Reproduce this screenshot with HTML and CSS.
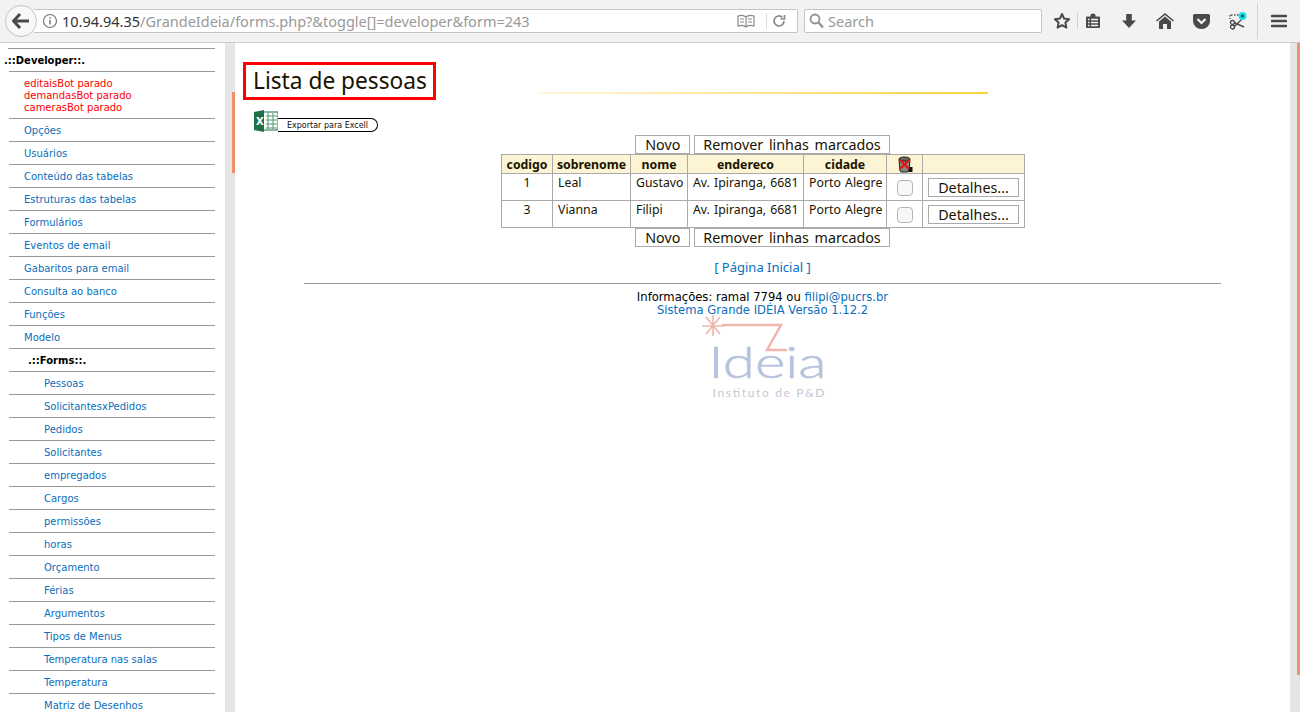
FILE: index.html
```html
<!DOCTYPE html>
<html lang="pt-BR">
<head>
    <meta charset="UTF-8">
    <title>Lista de pessoas</title>
    <link rel="stylesheet" href="styles.css">
</head>
<body>

    <header class="toolbar">
        <div class="back-button">
            <svg width="18" height="16" viewBox="0 0 18 16"><path d="M8 1 1.5 8 8 15M2 8h15" fill="none" stroke="#4a4a4a" stroke-width="3"/></svg>
        </div>
        <div class="url-bar">
            <svg class="info-icon" width="16" height="16" viewBox="0 0 16 16"><circle cx="8" cy="8" r="6.5" fill="none" stroke="#777" stroke-width="1.2"/><path d="M8 7v4.5M8 4.2v1.6" stroke="#777" stroke-width="1.5"/></svg>
            <span class="url-text"><span class="url-host">10.94.94.35</span>/GrandeIdeia/forms.php?&amp;toggle[]=developer&amp;form=243</span>
            <svg class="reader-icon" width="18" height="14" viewBox="0 0 18 14"><path d="M1 2c3-1 6-1 8 1 2-2 5-2 8-1v10c-3-1-6-1-8 1-2-2-5-2-8-1zM9 3v10M3 5h4M3 8h4M11 5h4M11 8h4" fill="none" stroke="#8a8a8a" stroke-width="1.2"/></svg>
            <span class="url-sep"></span>
            <svg class="reload-icon" width="14" height="14" viewBox="0 0 14 14"><path d="M12 7a5 5 0 1 1-1.6-3.7M12.5 1v4h-4" fill="none" stroke="#8a8a8a" stroke-width="1.7"/></svg>
        </div>
        <div class="search-bar">
            <svg width="15" height="16" viewBox="0 0 15 16"><circle cx="6" cy="6" r="4.5" fill="none" stroke="#8f8f8f" stroke-width="1.8"/><path d="m9.5 9.5 4.5 5" stroke="#8f8f8f" stroke-width="2.2"/></svg>
            <span>Search</span>
        </div>
        <div class="toolbar-icons">
            <svg class="icon-star" width="18" height="18" viewBox="0 0 18 18"><path d="m9 2 2.1 4.6 5 .6-3.7 3.4 1 5L9 13.1l-4.4 2.5 1-5-3.7-3.4 5-.6z" fill="none" stroke="#4a4a4a" stroke-width="2" stroke-linejoin="round"/></svg>
            <span class="tool-sep"></span>
            <svg class="icon-clip" width="16" height="16" viewBox="0 0 16 16"><path d="M2 3.5h3.5V2a2.5 1.5 0 0 1 5 0v1.5H14a1 1 0 0 1 1 1V14a1 1 0 0 1-1 1H2a1 1 0 0 1-1-1V4.500a1 1 0 0 1 1-1z" fill="#4a4a4a"/><path d="M3 6.500h1.500M6 6.500h7M3 9.500h1.500M6 9.500h7M3 12.500h1.500M6 12.500h7" stroke="#f3f2f0" stroke-width="1.300"/></svg>
            <svg class="icon-down" width="16" height="16" viewBox="0 0 16 16"><path d="M5.200 1h5.600v6.500H15L8 15 1 7.500h4.200z" fill="#4a4a4a"/></svg>
            <svg class="icon-home" width="18" height="16" viewBox="0 0 18 16"><path d="M9 0 0 7.500l1 1.100L9 2l8 6.600 1-1.100z" fill="#4a4a4a"/><path d="M9 3.500 3 8.500V16h4v-5h4v5h4V8.500z" fill="#4a4a4a"/></svg>
            <svg class="icon-pocket" width="17" height="15" viewBox="0 0 17 15"><path d="M1.500 0h14A1.500 1.500 0 0 1 17 1.500V7a8.500 8 0 0 1-17 0V1.500A1.500 1.500 0 0 1 1.500 0z" fill="#4a4a4a"/><path d="m4.500 5 4 4 4-4" fill="none" stroke="#f3f2f0" stroke-width="2.200"/></svg>
            <svg class="icon-scissors" width="18" height="18" viewBox="0 0 18 18"><path d="M2 3h9M1 3v4" stroke="#4a4a4a" stroke-dasharray="1.500 1.500" stroke-width="1.400"/><circle cx="3.500" cy="10.500" r="2" fill="none" stroke="#4a4a4a" stroke-width="1.300"/><circle cx="3.500" cy="15" r="2" fill="none" stroke="#4a4a4a" stroke-width="1.300"/><path d="m5 10.500 10 4.500M5 15 13 7" stroke="#4a4a4a" stroke-width="1.400"/><circle cx="13.500" cy="4" r="4" fill="#19e3ee"/><circle cx="13.500" cy="4" r="1.800" fill="#245a66"/></svg>
            <span class="tool-sep tool-sep-tall"></span>
            <svg class="icon-menu" width="16" height="14" viewBox="0 0 16 14"><path d="M1 2h14M1 7h14M1 12h14" stroke="#4a4a4a" stroke-width="2.600" stroke-linecap="round"/></svg>
        </div>
    </header>

    <div class="page">
        <nav class="sidebar">
            <div class="menu-title">.::Developer::.</div>
            <div class="menu-alert">editaisBot parado<br>demandasBot parado<br>camerasBot parado</div>
            <a class="menu-item" href="#">Opções</a>
            <a class="menu-item" href="#">Usuários</a>
            <a class="menu-item" href="#">Conteúdo das tabelas</a>
            <a class="menu-item" href="#">Estruturas das tabelas</a>
            <a class="menu-item" href="#">Formulários</a>
            <a class="menu-item" href="#">Eventos de email</a>
            <a class="menu-item" href="#">Gabaritos para email</a>
            <a class="menu-item" href="#">Consulta ao banco</a>
            <a class="menu-item" href="#">Funções</a>
            <a class="menu-item" href="#">Modelo</a>
            <div class="menu-title menu-subtitle">.::Forms::.</div>
            <a class="menu-item menu-sub" href="#">Pessoas</a>
            <a class="menu-item menu-sub" href="#">SolicitantesxPedidos</a>
            <a class="menu-item menu-sub" href="#">Pedidos</a>
            <a class="menu-item menu-sub" href="#">Solicitantes</a>
            <a class="menu-item menu-sub" href="#">empregados</a>
            <a class="menu-item menu-sub" href="#">Cargos</a>
            <a class="menu-item menu-sub" href="#">permissões</a>
            <a class="menu-item menu-sub" href="#">horas</a>
            <a class="menu-item menu-sub" href="#">Orçamento</a>
            <a class="menu-item menu-sub" href="#">Férias</a>
            <a class="menu-item menu-sub" href="#">Argumentos</a>
            <a class="menu-item menu-sub" href="#">Tipos de Menus</a>
            <a class="menu-item menu-sub" href="#">Temperatura nas salas</a>
            <a class="menu-item menu-sub" href="#">Temperatura</a>
            <a class="menu-item menu-sub" href="#">Matriz de Desenhos</a>
        </nav>
        <div class="scrollbar"><div class="thumb thumb-side"></div></div>

        <main class="content">
            <div class="title-row">
                <h1 class="page-title">Lista de pessoas</h1>
                <div class="title-line"></div>
            </div>

            <a class="excel-link" href="#">
                <svg class="excel-icon" width="24" height="22" viewBox="0 0 24 22">
                    <rect x="9" y="2" width="15" height="18" fill="#fff" stroke="#1e7145"/>
                    <path d="M12 6h11M12 10h11M12 14h11M12 18h11M14 3v16M19 3v16" stroke="#4f9a72"/>
                    <path d="M0 2 10 0v22L0 20z" fill="#1e7145"/>
                    <text x="2" y="15" class="excel-x">X</text>
                </svg>
                <span class="excel-label">Exportar para Excell</span>
            </a>

            <div class="table-actions table-actions-top">
                <button class="btn btn-new">Novo</button>
                <button class="btn">Remover linhas marcados</button>
            </div>
            <table class="grid">
                <colgroup>
                    <col class="col-1"><col class="col-2"><col class="col-3"><col class="col-4"><col class="col-5"><col class="col-6"><col class="col-7">
                </colgroup>
                <tr>
                    <th>codigo</th><th>sobrenome</th><th>nome</th><th>endereco</th><th>cidade</th>
                    <th>
                        <svg class="trash-icon" width="16" height="17" viewBox="0 0 16 17">
                            <path d="M2 3.500 3 15a2 2 0 0 0 2 1h5a2 2 0 0 0 2-1l1-11.500z" fill="#7d8a7e" stroke="#222"/>
                            <ellipse cx="7.500" cy="3" rx="5.500" ry="2" fill="#5d665e" stroke="#222"/>
                            <rect x="11.500" y="11" width="4" height="5" fill="#111"/>
                            <path d="m3 4 9 9M12 4l-9 9" stroke="#ee1111" stroke-width="2.200"/>
                        </svg>
                    </th>
                    <th></th>
                </tr>
                <tr>
                    <td class="center">1</td><td>Leal</td><td>Gustavo</td><td>Av. Ipiranga, 6681</td><td>Porto Alegre</td>
                    <td class="center cell-check"><span class="check"></span></td>
                    <td class="center cell-btn"><button class="btn btn-row">Detalhes...</button></td>
                </tr>
                <tr>
                    <td class="center">3</td><td>Vianna</td><td>Filipi</td><td>Av. Ipiranga, 6681</td><td>Porto Alegre</td>
                    <td class="center cell-check"><span class="check"></span></td>
                    <td class="center cell-btn"><button class="btn btn-row">Detalhes...</button></td>
                </tr>
            </table>
            <div class="table-actions">
                <button class="btn btn-new">Novo</button>
                <button class="btn">Remover linhas marcados</button>
            </div>

            <p class="home-link"><a href="#">[ Página Inicial ]</a></p>
            <hr class="divider">
            <p class="info">Informações: ramal 7794 ou <a href="#">filipi@pucrs.br</a><br><a href="#">Sistema Grande IDÉIA Versão 1.12.2</a></p>

            <svg class="logo" width="130" height="84" viewBox="0 0 130 84">
                <path d="M8 2 22 19M22 2 8 19M15 0v21M4 11h22" stroke="#efb6ab" stroke-width="1.600"/>
                <path d="M24 10h59L69 35h20" fill="none" stroke="#efb6ab" stroke-width="2.500"/>
                <text x="10.500" y="63" class="logo-name" textLength="118" lengthAdjust="spacingAndGlyphs">Ideia</text>
                <text x="14.500" y="82" class="logo-sub" textLength="112" lengthAdjust="spacing">Instituto de P&amp;D</text>
            </svg>
        </main>
        <div class="scrollbar"><div class="thumb thumb-main"></div></div>
    </div>

</body>
</html>
```

FILE: styles.css
```css
html, body {
    height: 100%;
    margin: 0;
    overflow: hidden;
    background-color: white;
}

body {
    display: flex;
    flex-direction: column;
    font-family: 'DejaVu Sans', sans-serif;
}

.toolbar {
    height: 42px;
    flex-shrink: 0;
    display: flex;
    align-items: center;
    background-color: #f3f2f0;
    border-bottom: 1px solid #cdcbc8;
    font-family: 'Noto Sans', sans-serif;
    font-size: 14.5px;
}

.back-button {
    width: 30px;
    height: 30px;
    margin-left: 5px;
    border: 1px solid #c4c4c4;
    border-radius: 50%;
    background-color: #f8f8f7;
    display: flex;
    align-items: center;
    justify-content: center;
    z-index: 1;
}

.url-bar {
    width: 755px;
    height: 22px;
    margin-left: -3px;
    padding-left: 8px;
    box-sizing: content-box;
    display: flex;
    align-items: center;
    background-color: white;
    border: 1px solid #c4c4c4;
    border-left: none;
    border-radius: 0 2px 2px 0;
}

.info-icon {
    flex-shrink: 0;
}

.url-text {
    margin-left: 4px;
    color: #999;
    white-space: nowrap;
}

.url-host {
    color: #333;
}

.reader-icon {
    margin-left: auto;
}

.url-sep {
    width: 1px;
    height: 16px;
    margin: 0 5px 0 11px;
    background-color: #ddd;
}

.reload-icon {
    margin-right: 11px;
}

.search-bar {
    width: 232px;
    height: 22px;
    margin-left: 6px;
    padding-left: 4px;
    display: flex;
    align-items: center;
    gap: 4px;
    color: #999;
    background-color: white;
    border: 1px solid #c4c4c4;
    border-radius: 2px;
}

.toolbar-icons {
    display: flex;
    align-items: center;
    margin-left: 11px;
}

.tool-sep {
    width: 1px;
    height: 16px;
    margin: 0 7px 0 6px;
    background-color: #d4d2cf;
}

.tool-sep-tall {
    height: 36px;
    margin: 0 13px 0 10px;
}

.icon-down {
    margin-left: 20px;
}

.icon-pocket, .icon-home, .icon-scissors {
    margin-left: 19px;
}

.page {
    flex: 1;
    display: flex;
    min-height: 0;
}

.sidebar {
    width: 206px;
    padding: 5px 10px 0 9px;
    overflow: hidden;
    font-size: 10px;
    flex-shrink: 0;
}

.menu-title, .menu-item, .menu-alert {
    display: block;
    border-top: 1px solid #999;
    line-height: 24px;
    height: 22px;
    white-space: nowrap;
}

.menu-title {
    margin-left: -5px;
    padding-left: 0;
    border-image: linear-gradient(to right, transparent 5px, #999 5px) 1;
    font-weight: bold;
    color: black;
}

.menu-subtitle {
    margin-left: 0;
    padding-left: 19px;
    border-image: none;
}

.menu-alert {
    height: auto;
    padding: 6px 0 4px 15px;
    line-height: 12px;
    color: #f00;
}

.menu-item {
    padding-left: 15px;
    color: #0a6ebd;
    text-decoration: none;
}

.menu-sub {
    padding-left: 35px;
}

.scrollbar {
    width: 10px;
    flex-shrink: 0;
    display: flex;
    justify-content: flex-end;
    background-color: #e5e5e5;
}

.thumb {
    width: 3px;
    background-color: #f18f6c;
}

.thumb-side {
    height: 81px;
    margin-top: 49px;
}

.thumb-main {
    height: 632px;
}

.content {
    flex: 1;
    min-width: 0;
    display: flex;
    flex-direction: column;
    align-items: center;
    font-size: 13px;
    font-family: 'Noto Sans', sans-serif;
}

.title-row {
    align-self: stretch;
    display: flex;
    align-items: center;
    margin: 19px 0 0 8px;
}

.page-title {
    margin: 0;
    padding: 0 6px 0 7px;
    height: 32px;
    line-height: 32px;
    border: 3px solid #f00;
    font-size: 22.7px;
    font-weight: normal;
    color: #1a1300;
}

.title-line {
    width: 450px;
    height: 2px;
    margin: 23px 0 0 102px;
    background-image: linear-gradient(to right, #fff6da, #fcd23c);
}

.excel-link {
    align-self: flex-start;
    display: flex;
    align-items: center;
    margin: 10px 0 0 19px;
    text-decoration: none;
}

.excel-icon {
    z-index: 1;
}

.excel-x {
    font-family: 'DejaVu Sans', sans-serif;
    font-size: 10px;
    font-weight: bold;
    fill: white;
}

.excel-label {
    width: 90px;
    height: 12px;
    padding-left: 9px;
    margin-top: 7px;
    border: 1px solid black;
    border-left: none;
    border-radius: 0 7px 7px 0;
    font-family: 'DejaVu Sans', sans-serif;
    font-size: 8px;
    line-height: 13px;
    color: #111;
}

.table-actions {
    display: flex;
    gap: 4px;
}

.table-actions-top {
    margin-top: 3px;
}

.btn {
    height: 19px;
    padding: 0 8px;
    background-color: white;
    border: 1px solid #aaa;
    font-family: 'Noto Sans', sans-serif;
    font-size: 14.3px;
    word-spacing: 2px;
    line-height: 17px;
    color: #1a1300;
    border-radius: 0;
}

.btn-new {
    width: 55px;
    padding: 0;
}

.grid {
    width: 523px;
    margin-left: 1px;
    border-collapse: collapse;
    table-layout: fixed;
    font-size: 12.3px;
}

.col-1 { width: 51px; }
.col-2 { width: 78px; }
.col-3 { width: 57px; }
.col-4 { width: 116px; }
.col-5 { width: 83px; }
.col-6 { width: 36px; }
.col-7 { width: 102px; }

.grid th, .grid td {
    border: 1px solid #aaa;
    padding: 0 5px 1px;
    color: #1a1300;
    white-space: nowrap;
}

.grid th {
    height: 18px;
    background-color: #fdf4d3;
    font-weight: bold;
    text-align: center;
    padding: 0;
}

.grid td {
    height: 25px;
    vertical-align: top;
    line-height: 17px;
    word-spacing: 1px;
}

.grid .center {
    text-align: center;
}

.grid .cell-check, .grid .cell-btn {
    vertical-align: middle;
    padding: 0;
}

.check {
    display: inline-block;
    width: 14px;
    height: 14px;
    vertical-align: middle;
    background-color: #f7f7f7;
    border: 1px solid #b5b5b5;
    border-radius: 4px;
}

.trash-icon {
    display: block;
    margin: 0 auto;
}

.btn-row {
    width: 91px;
    padding: 0;
    vertical-align: middle;
}

.home-link {
    margin: 11px 0 0;
    line-height: 19px;
}

.home-link a, .info a {
    color: #0a6ebd;
    text-decoration: none;
}

.divider {
    width: 917px;
    margin: 6px 0 0;
    border: none;
    border-top: 1px solid #999;
}

.info {
    margin: 7px 0 0;
    font-family: 'DejaVu Sans', sans-serif;
    font-size: 11.6px;
    line-height: 13px;
    text-align: center;
    color: black;
}

.logo {
    margin-top: -2px;
}

.logo-name {
    font-family: 'Lato', sans-serif;
    font-weight: 300;
    font-size: 43px;
    stroke: #b6c3dc;
    stroke-width: 0.6px;
    fill: #b6c3dc;
}

.logo-sub {
    font-family: 'Lato', sans-serif;
    font-size: 12px;
    fill: #c4c9d2;
}
```
